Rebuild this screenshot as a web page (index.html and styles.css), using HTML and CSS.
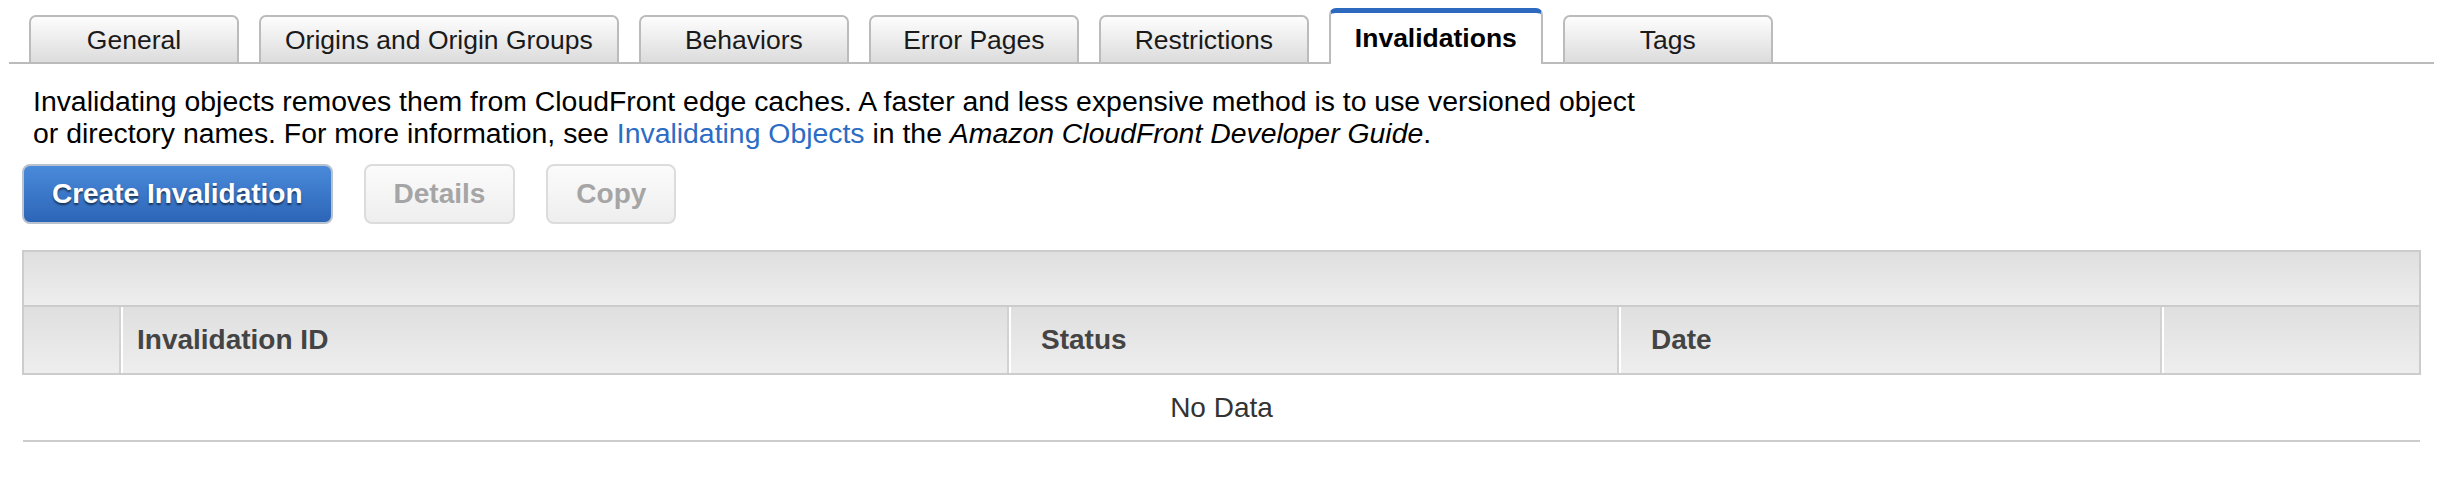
FILE: index.html
```html
<!DOCTYPE html>
<html lang="en">
<head>
<meta charset="utf-8">
<title>Invalidations</title>
<link rel="stylesheet" href="styles.css">
</head>
<body>
<div class="tabs">
  <div class="tab">General</div>
  <div class="tab">Origins and Origin Groups</div>
  <div class="tab">Behaviors</div>
  <div class="tab">Error Pages</div>
  <div class="tab">Restrictions</div>
  <div class="tab active">Invalidations</div>
  <div class="tab">Tags</div>
</div>
<div class="content">
  <p class="intro">Invalidating objects removes them from CloudFront edge caches. A faster and less expensive method is to use versioned object or directory names. For more information, see <a class="link" href="#">Invalidating Objects</a> in the <i>Amazon CloudFront Developer Guide</i>.</p>
  <div class="actions">
    <button class="btn primary">Create Invalidation</button>
    <button class="btn disabled">Details</button>
    <button class="btn disabled">Copy</button>
  </div>
  <table class="grid">
    <colgroup>
      <col class="w-check">
      <col class="w-id">
      <col class="w-status">
      <col class="w-date">
      <col>
    </colgroup>
    <thead>
      <tr class="toolbar"><th colspan="5"></th></tr>
      <tr class="cols">
        <th class="c-check"></th>
        <th class="c-id">Invalidation ID</th>
        <th class="c-status">Status</th>
        <th class="c-date">Date</th>
        <th class="c-last"></th>
      </tr>
    </thead>
    <tbody>
      <tr class="empty"><td colspan="5">No Data</td></tr>
    </tbody>
  </table>
</div>
</body>
</html>
```
FILE: styles.css
```css
html, body {
  margin: 0;
  padding: 0;
  background: #fff;
}
body {
  font-family: "Liberation Sans", Arial, Helvetica, sans-serif;
  color: #000;
}
.tabs {
  display: flex;
  align-items: flex-end;
  gap: 20px;
  margin: 0 14px 0 9px;
  padding: 8px 0 0 20px;
  border-bottom: 2px solid #bbbbbb;
}
.tab {
  box-sizing: border-box;
  min-width: 210px;
  height: 47px;
  padding: 2px 24px 0;
  display: flex;
  align-items: center;
  justify-content: center;
  font-size: 26.5px;
  color: #1a1a1a;
  border: 2px solid #bbbbbb;
  border-bottom: none;
  border-radius: 7px 7px 0 0;
  background: linear-gradient(#fdfdfd, #dcdcdc);
}
.tab.active {
  height: 56px;
  margin-bottom: -2px;
  padding-bottom: 2px;
  border-top: 5px solid #2e69c0;
  background: #fff;
  font-weight: bold;
  color: #000;
}
.content {
  padding: 0 27px 0 22px;
}
.intro {
  margin: 21px 0 0 11px;
  max-width: 1612px;
  font-size: 28.4px;
  line-height: 32px;
}
.link {
  color: #2c6cc4;
  text-decoration: none;
}
.actions {
  display: flex;
  gap: 31px;
  margin-top: 15px;
}
.btn {
  box-sizing: border-box;
  height: 60px;
  padding: 0 28px;
  font-family: inherit;
  font-size: 28px;
  font-weight: bold;
  border-radius: 8px;
  border: 2px solid #dcdcdc;
}
.btn.primary {
  color: #fff;
  border-color: #b9c2cf;
  background: linear-gradient(#4a8ada, #2c65b7);
  text-shadow: 0 2px 2px rgba(0, 0, 0, 0.55);
}
.btn.disabled {
  color: #a5a5a5;
  background: linear-gradient(#fbfbfb, #eeeeee);
}
.grid {
  width: 100%;
  margin-top: 26px;
  table-layout: fixed;
  border-collapse: collapse;
}
.w-check { width: 97px; }
.w-id { width: 888px; }
.w-status { width: 610px; }
.w-date { width: 543px; }
.grid th {
  padding: 0;
  text-align: left;
  font-size: 28px;
  font-weight: bold;
  color: #444;
  background: linear-gradient(#dfdfdf, #eeeeee);
}
.toolbar th {
  height: 53px;
  border: 2px solid #cccccc;
}
.cols th {
  height: 66px;
  border-bottom: 2px solid #cccccc;
}
.cols th.c-check { border-left: 2px solid #cccccc; }
.cols th.c-last { border-right: 2px solid #cccccc; }
.cols th + th {
  border-left: 2px solid #d2d2d2;
  box-shadow: inset 2px 0 0 #ffffff;
}
.c-id { padding-left: 16px !important; }
.c-status, .c-date { padding-left: 32px !important; }
.empty td {
  height: 65px;
  padding: 0;
  text-align: center;
  font-size: 28px;
  color: #333;
  border-bottom: 2px solid #cccccc;
}
```
